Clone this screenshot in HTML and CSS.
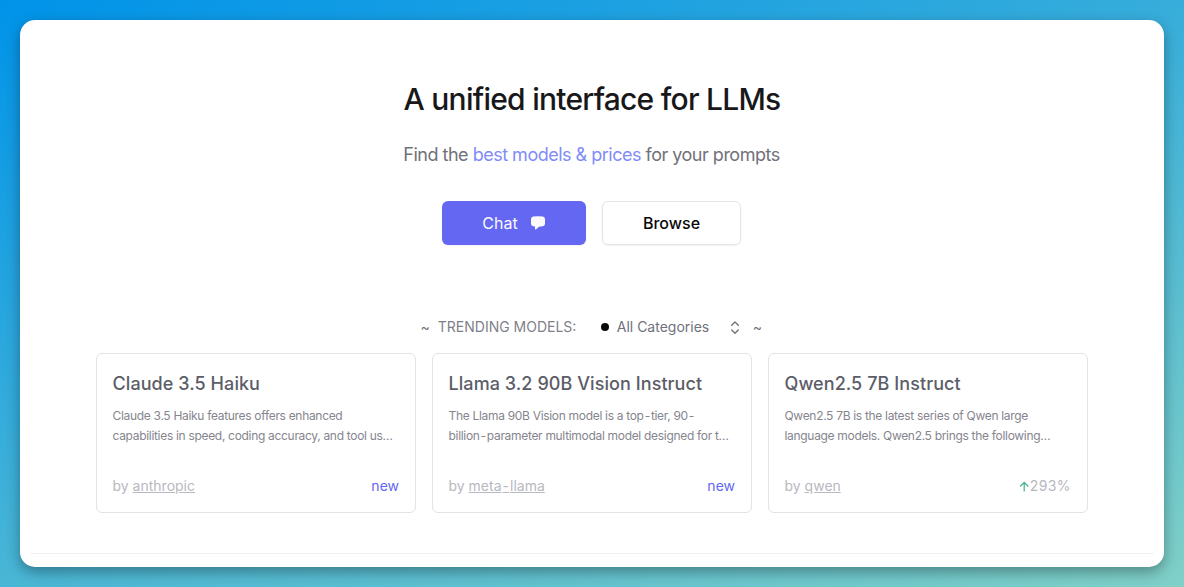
FILE: index.html
```html
<!DOCTYPE html>
<html lang="en">
<head>
  <meta charset="UTF-8">
  <title>A unified interface for LLMs</title>
  <meta name="viewport" content="width=device-width, initial-scale=1.0">
  <link rel="stylesheet" href="styles.css">
</head>
<body>
  <main class="window">
    <section class="hero">
      <h1>A unified interface for LLMs</h1>
      <p class="subtitle">Find the <a href="#">best models &amp; prices</a> for your prompts</p>
      <div class="actions">
        <button class="btn btn-primary">
          <span>Chat</span>
          <svg width="16" height="14" viewBox="0 0 16 14" fill="currentColor"><path d="M3.300 .6Q8 -.2 12.700 .6Q15 1 15 3.200V7.700Q15 9.900 12.700 10.300Q10.800 10.600 9 10.700L6.200 13.200Q5 14 5 12.800V10.500L3.300 10.300Q1 9.900 1 7.700V3.200Q1 1 3.300 .6Z"/></svg>
        </button>
        <button class="btn btn-outline"><span>Browse</span></button>
      </div>
    </section>

    <section class="trending">
      <div class="filter">
        <span class="tilde">~</span>
        <h2>TRENDING MODELS:</h2>
        <button class="select">
          <span class="dot"></span>
          <span class="select-label">All Categories</span>
          <svg width="16" height="16" viewBox="0 0 24 24" fill="none" stroke="currentColor" stroke-width="2" stroke-linecap="round" stroke-linejoin="round"><path d="M7 9.500 12 4.500l5 5M7 16.500l5 5 5-5"/></svg>
        </button>
        <span class="tilde">~</span>
      </div>

      <div class="cards">
        <article class="card">
          <h3>Claude 3.5 Haiku</h3>
          <p>Claude 3.5 Haiku features offers enhanced<br>capabilities in speed, coding accuracy, and tool us…</p>
          <footer>
            <span>by <a href="#">anthropic</a></span>
            <span class="new">new</span>
          </footer>
        </article>
        <article class="card">
          <h3>Llama 3.2 90B Vision Instruct</h3>
          <p>The Llama 90B Vision model is a top<span class="dash">-</span>tier, 90<span class="dash">-</span><br>billion<span class="dash">-</span>parameter multimodal model designed for t…</p>
          <footer>
            <span>by <a href="#">meta<span class="dash">-</span>llama</a></span>
            <span class="new">new</span>
          </footer>
        </article>
        <article class="card">
          <h3>Qwen2.5 7B Instruct</h3>
          <p>Qwen2.5 7B is the latest series of Qwen large<br>language models. Qwen2.5 brings the following…</p>
          <footer>
            <span>by <a href="#">qwen</a></span>
            <span class="growth">
              <svg width="11" height="12" viewBox="0 0 11 12" fill="none" stroke="currentColor" stroke-width="1.2" stroke-linecap="round" stroke-linejoin="round"><path d="M5.200 11V2.500M1.500 6l3.700-3.500L8.900 6"/></svg>293%
            </span>
          </footer>
        </article>
      </div>
    </section>

    <hr>
  </main>
</body>
</html>
```
FILE: styles.css
```css
* { margin: 0; padding: 0; box-sizing: border-box; }
body {
  height: 587px;
  padding: 20px;
  overflow: hidden;
  background: linear-gradient(160deg, #0093e9 0%, #80d0c7 100%);
  font-family: Inter, sans-serif;
  color: #18181b;
}
button {
  font: inherit;
  background: none;
  border: none;
  cursor: pointer;
}
.window {
  height: 547px;
  padding: 56px 10px 0;
  background: white;
  border-radius: 15px;
  box-shadow: 0 5px 14px rgba(0, 0, 0, 0.34);
}
.hero {
  display: flex;
  flex-direction: column;
  align-items: center;
}
h1 {
  font-size: 30px;
  line-height: 46px;
  font-weight: 500;
  letter-spacing: -0.75px;
  white-space: nowrap;
}
.subtitle {
  margin-top: 19px;
  padding-right: 1px;
  font-size: 18px;
  line-height: 28px;
  letter-spacing: -0.5px;
  color: #71717a;
  white-space: nowrap;
}
.subtitle a {
  color: #818cf8;
  text-decoration: none;
}
.actions {
  display: flex;
  gap: 16px;
  margin-top: 32px;
  padding-right: 1px;
}
.btn {
  display: flex;
  align-items: center;
  justify-content: center;
  height: 44px;
  border-radius: 6px;
  font-size: 16px;
  font-weight: 500;
  box-shadow: 0 1px 2px rgba(0, 0, 0, 0.06);
}
.btn-primary {
  width: 144px;
  gap: 12px;
  background: #6467f2;
  color: #fafafa;
  font-weight: 400;
}
.btn-outline {
  width: 139px;
  border: 1px solid #e4e4e7;
  color: #09090b;
}
.trending { margin-top: 71px; }
.filter {
  display: flex;
  align-items: center;
  height: 21px;
  padding-left: 390.5px;
  font-size: 14px;
  color: #71717a;
}
.tilde { padding-bottom: 1px; }
.filter h2 {
  width: 163px;
  margin-left: 8px;
  font-size: 14px;
  font-weight: 400;
  color: #7f7f8a;
}
.select {
  display: flex;
  align-items: center;
  width: 142px;
  margin-right: 10px;
  color: #71717a;
}
.dot {
  width: 8px;
  height: 8px;
  margin-right: 8px;
  border-radius: 50%;
  background: #09090b;
}
.select-label {
  flex: 1;
  text-align: left;
}
.cards {
  display: grid;
  grid-template-columns: repeat(3, 320px);
  gap: 16px;
  justify-content: center;
  margin-top: 16px;
}
.card {
  display: flex;
  flex-direction: column;
  height: 160px;
  padding: 16px 16px 16px 15.5px;
  border: 1px solid #e4e4e7;
  border-radius: 6px;
}
.card h3 {
  font-size: 18px;
  line-height: 28px;
  font-weight: 500;
  letter-spacing: 0.07px;
  color: #5b5d68;
  white-space: nowrap;
}
.card p {
  margin-top: 8px;
  font-size: 12px;
  line-height: 20px;
  letter-spacing: -0.31px;
  color: #85858e;
  white-space: nowrap;
}
.dash { padding: 0 1px; }
.card footer {
  display: flex;
  justify-content: space-between;
  margin-top: auto;
  font-size: 14px;
  line-height: 20px;
  color: #b8b8c0;
}
.card footer a { color: inherit; }
.card .new { color: #6467f2; }
.growth {
  display: flex;
  align-items: center;
  letter-spacing: 0.4px;
}
.growth svg { color: #43b092; }
hr {
  margin-top: 40px;
  border: none;
  border-top: 1px solid #f2f2f4;
}
```
